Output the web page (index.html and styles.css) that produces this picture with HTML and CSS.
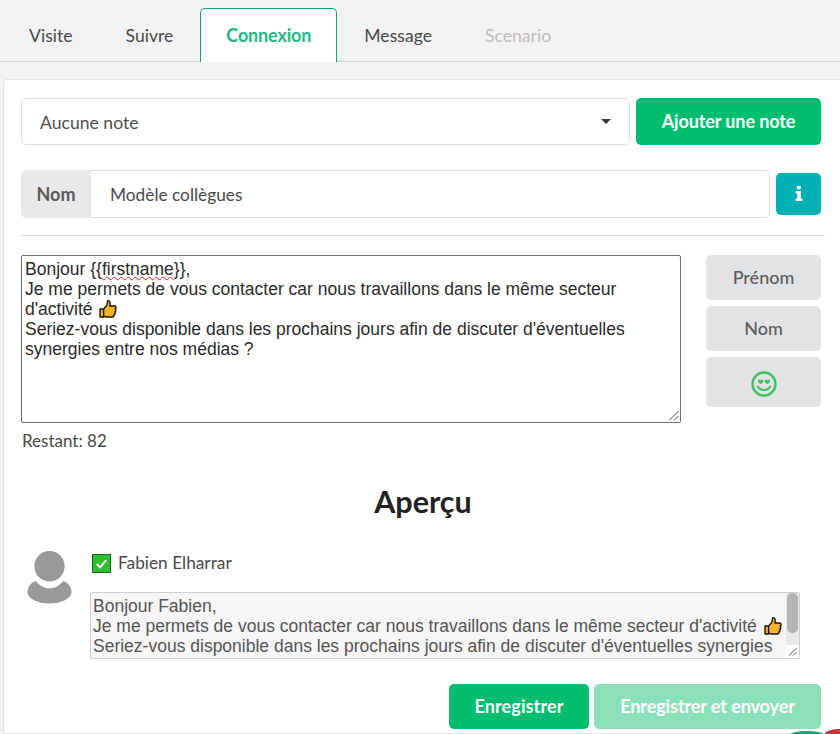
FILE: index.html
```html
<!DOCTYPE html>
<html lang="fr">
<head>
<meta charset="utf-8">
<title>Connexion</title>
<link rel="stylesheet" href="styles.css">
</head>
<body>
<nav class="tabs">
  <a class="tab">Visite</a>
  <a class="tab">Suivre</a>
  <a class="tab active">Connexion</a>
  <a class="tab">Message</a>
  <a class="tab disabled">Scenario</a>
</nav>
<main class="card">
  <div class="note-row">
    <div class="select">Aucune note<span class="caret"></span></div>
    <button class="btn btn-green btn-note">Ajouter une note</button>
  </div>
  <div class="name-row">
    <div class="input-group">
      <span class="addon">Nom</span>
      <span class="name-input">Modèle collègues</span>
    </div>
    <button class="btn btn-info" aria-label="Info">
      <svg width="8" height="15" viewBox="0 0 8 15"><path fill="#fff" d="M2 0h4v3.2H2zM.6 5h5.2v7.4h1.6V15H.6v-2.6h1.6V7.6H.6z"/></svg>
    </button>
  </div>
  <hr class="rule">
  <div class="editor-row">
    <div class="editor-col">
      <div class="editor">Bonjour {{<span class="misspelled">firstname</span>}},<br>Je me permets de vous contacter car nous travaillons dans le même secteur<br>d'activité <svg class="thumb" viewBox="0 0 20 20"><path fill="#f5b32e" stroke="#1d1300" stroke-width="1.4" stroke-linejoin="round" d="M2 10h3.600v8H2zM5.600 10l3.200-3.600.9-4.600c2-.5 3 1.500 2.200 5.200h4.700c1.900 0 2 2.600.5 3 1.200.7 1 2.600-.3 2.900.7 1 .4 2.400-.8 2.700.3 1.200-.5 2.400-1.900 2.400H8.500c-1.300 0-2-.6-2.900-.9z"/></svg><br>Seriez-vous disponible dans les prochains jours afin de discuter d'éventuelles<br>synergies entre nos médias ?
        <svg class="grip" width="11" height="11" viewBox="0 0 11 11"><path stroke="#555" fill="none" d="M1 10.500 10.500 1M6 10.500 10.500 6"/></svg>
      </div>
      <div class="remaining">Restant: 82</div>
    </div>
    <div class="side">
      <button class="btn btn-grey">Prénom</button>
      <button class="btn btn-grey">Nom</button>
      <button class="btn btn-grey btn-emoji" aria-label="Emoji">
        <svg width="26" height="26" viewBox="0 0 26 26"><circle cx="13" cy="13" r="11.500" fill="none" stroke="#3fc25f" stroke-width="2.400"/><path fill="#3fc25f" d="M7 9.500c.7-1.300 2-1 2.700-.3.700-.7 2-1 2.700.3.400 1.300-1.400 2.700-2.700 3.500C8.400 12.200 6.600 10.800 7 9.500zM13.600 9.500c.7-1.300 2-1 2.700-.3.700-.7 2-1 2.700.3.400 1.300-1.400 2.700-2.700 3.500-1.300-.8-3.100-2.200-2.700-3.500z"/><path fill="none" stroke="#3fc25f" stroke-width="2" stroke-linecap="round" d="M6.800 15.500c2.500 4.500 10 4.500 12.400 0"/></svg>
      </button>
    </div>
  </div>
  <h2 class="title">Aperçu</h2>
  <div class="preview">
    <svg class="avatar" width="45" height="54" viewBox="0 0 46 54"><circle cx="23" cy="16" r="15.500" fill="#999"/><path fill="#999" d="M9 31c4 5 9 7.500 14 7.500S33 36 37 31c5 1.500 8.500 6 8.500 11.500C45.500 49 35 54 23 54S.5 49 .5 42.500C.5 37 4 32.500 9 31z"/></svg>
    <div class="preview-main">
      <div class="person">
        <svg class="check" width="20" height="20" viewBox="0 0 20 20"><rect x=".5" y=".5" width="19" height="19" fill="#2fc02f" stroke="#1d5c1d"/><path fill="none" stroke="#fff" stroke-width="2" d="m5 10.500 3.500 3.500L15 6.500"/></svg>
        <span>Fabien Elharrar</span>
      </div>
      <div class="preview-box">
        <div class="preview-text">Bonjour Fabien,<br>Je me permets de vous contacter car nous travaillons dans le même secteur d'activité <svg class="thumb" viewBox="0 0 20 20"><path fill="#f5b32e" stroke="#1d1300" stroke-width="1.4" stroke-linejoin="round" d="M2 10h3.600v8H2zM5.600 10l3.200-3.600.9-4.600c2-.5 3 1.500 2.200 5.200h4.700c1.900 0 2 2.600.5 3 1.200.7 1 2.600-.3 2.900.7 1 .4 2.400-.8 2.700.3 1.200-.5 2.400-1.900 2.400H8.500c-1.300 0-2-.6-2.900-.9z"/></svg><br>Seriez-vous disponible dans les prochains jours afin de discuter d'éventuelles synergies</div>
        <div class="scrollbar"><span class="thumb-bar"></span><span class="corner"><svg width="9" height="9" viewBox="0 0 9 9"><path stroke="#555" fill="none" d="M1 8.500 8.500 1M5 8.500 8.500 5"/></svg></span></div>
      </div>
    </div>
  </div>
  <div class="actions">
    <button class="btn btn-green btn-save">Enregistrer</button>
    <button class="btn btn-green btn-send">Enregistrer et envoyer</button>
  </div>
</main>
<span class="bubble bubble-green"></span>
<span class="bubble bubble-red"></span>
</body>
</html>
```
FILE: styles.css
```css
* { box-sizing: border-box; }
html, body { height: 100%; overflow: hidden; }
body {
  margin: 0;
  background: #f3f3f3;
  font-family: Lato, "Open Sans", sans-serif;
  color: #4a4a4a;
  position: relative;
}
.tabs {
  display: flex;
  padding: 8px 0 0 3px;
  height: 62px;
  border-bottom: 1px solid #d5d5d5;
  font-size: 17.600px;
}
.tab {
  padding: 0 27px 0 26px;
  height: 54px;
  line-height: 55px;
  color: #4a4a4a;
}
.tab.active {
  padding: 0 25px;
  margin-right: 1px;
  background: #fff;
  border: 1px solid #10a878;
  border-bottom: 0;
  border-radius: 5px 5px 0 0;
  color: #1dba82;
  font-size: 18px;
  font-weight: 700;
  letter-spacing: -.15px;
  line-height: 53px;
}
.tab.disabled { color: #bdbdbd; }
.card {
  margin: 17px 0 0 3px;
  height: 655px;
  background: #fff;
  border: 1px solid #e3e3e3;
  border-right: 0;
  border-radius: 4px 0 0 0;
  padding: 18px 19px 0 17px;
}
.note-row { display: flex; gap: 6px; }
.select {
  flex: 1;
  height: 47px;
  display: flex;
  align-items: center;
  justify-content: space-between;
  padding: 1px 18px 0;
  border: 1px solid #dedede;
  border-radius: 5px;
  font-size: 17.600px;
  color: #4f4f4f;
}
.caret {
  width: 0; height: 0;
  margin-top: -2px;
  border: 5px solid transparent;
  border-top: 5px solid #3a3a3a;
  border-bottom: 0;
}
.btn {
  border: 0;
  border-radius: 5px;
  font-family: inherit;
  font-size: 18px;
  padding: 0 0 2px;
  display: flex;
  align-items: center;
  justify-content: center;
}
.btn-green {
  background: #00bd70;
  color: #fff;
  font-weight: 700;
  letter-spacing: -.1px;
}
.btn-note { width: 185px; height: 47px; }
.name-row { display: flex; align-items: center; gap: 6px; margin-top: 25px; }
.input-group { flex: 1; display: flex; height: 48px; }
.addon {
  width: 70px;
  background: #e9e9e9;
  border-radius: 5px 0 0 5px;
  display: flex;
  align-items: center;
  justify-content: center;
  font-weight: 700;
  color: #5a5a5a;
  font-size: 18px;
}
.name-input {
  flex: 1;
  display: flex;
  align-items: center;
  padding: 0 19px;
  border: 1px solid #dedede;
  border-left: 0;
  border-radius: 0 5px 5px 0;
  font-size: 17.300px;
}
.btn-info { width: 45px; height: 42px; background: #00b1b3; }
.rule {
  margin: 17px -4px 0 0;
  border: 0;
  border-top: 1px solid #dcdcdc;
}
.editor-row { display: flex; margin-top: 19px; }
.editor-col { width: 660px; }
.editor {
  position: relative;
  height: 168px;
  border: 1px solid #6e6e6e;
  border-radius: 2px;
  padding: 3px 3px;
  font-family: "Liberation Sans", Arial, sans-serif;
  font-size: 17.500px;
  line-height: 20px;
  color: #2b2b2b;
}
.misspelled {
  text-decoration: underline wavy #e0241c;
  text-decoration-thickness: 1px;
  text-underline-offset: 1px;
}
.thumb { width: 20px; height: 20px; vertical-align: -4px; margin-left: 1px; }
.grip { position: absolute; right: 1px; bottom: 1px; }
.remaining { margin: 8px 0 0 1px; font-size: 17px; line-height: 20px; }
.side {
  width: 115px;
  margin-left: 25px;
  display: flex;
  flex-direction: column;
  gap: 6px;
}
.btn-grey {
  height: 45px;
  background: #e2e3e5;
  color: #5c5c5c;
  font-size: 18px;
  font-weight: 500;
}
.btn-emoji { height: 50px; padding: 4px 0 0; }
.title {
  margin: 30px 0 0;
  padding-left: 4px;
  text-align: center;
  font-size: 30.500px;
  line-height: 40px;
  font-weight: 700;
  color: #222;
}
.preview { display: flex; margin-top: 29px; padding-left: 6px; }
.avatar { flex: none; }
.preview-main { margin-left: 18px; width: 710px; }
.person {
  display: flex;
  align-items: center;
  gap: 7px;
  padding: 3px 0 0 2px;
  font-size: 17.300px;
  line-height: 20px;
}
.check { width: 19px; height: 19px; }
.preview-box {
  display: flex;
  height: 67px;
  margin-top: 19px;
  background: #f6f6f6;
  border: 1px solid #cfcfcf;
  border-radius: 2px;
  overflow: hidden;
}
.preview-text {
  flex: 1;
  min-width: 0;
  padding: 3px 2px;
  font-family: "Liberation Sans", Arial, sans-serif;
  font-size: 17.500px;
  line-height: 20px;
  color: #555;
  white-space: nowrap;
  overflow: hidden;
}
.scrollbar {
  width: 13px;
  background: #e9e9e9;
  display: flex;
  flex-direction: column;
  justify-content: space-between;
  align-items: center;
}
.thumb-bar { width: 11px; height: 40px; background: #b4b4b4; border-radius: 5px; }
.corner { width: 13px; height: 13px; background: #fff; display: flex; align-items: center; justify-content: center; }
.actions { display: flex; justify-content: flex-end; gap: 5px; margin-top: 25px; }
.btn-save { width: 140px; height: 45px; letter-spacing: .1px; }
.btn-send { width: 227px; height: 45px; background: #8be0bb; }
.bubble { position: absolute; }
.bubble-green { width: 32px; height: 3px; left: 791px; top: 731px; background: #1f9e78; border-radius: 50% 50% 0 0 / 100% 100% 0 0; }
.bubble-red { width: 15px; height: 5px; left: 825px; top: 729px; background: #c8323a; border-radius: 100% 0 0 0 / 100% 0 0 0; }
```
